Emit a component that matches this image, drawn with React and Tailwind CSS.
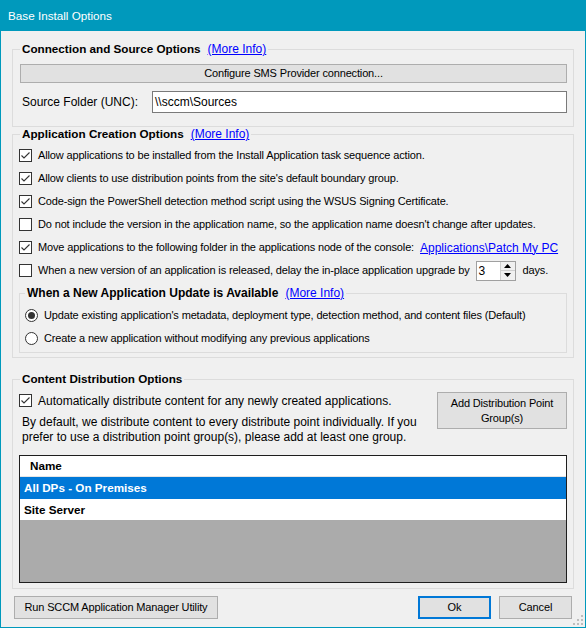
import React from "react";

const Check = ({ checked }) => (
  <span className="w-[13px] h-[13px] shrink-0 border border-[#333333] bg-white flex items-center justify-center">
    {checked && (
      <svg width="11" height="11" viewBox="0 0 11 11">
        <path d="M1.5 5.5 L4 8 L9.5 2.5" stroke="#333333" strokeWidth="1.1" fill="none" />
      </svg>
    )}
  </span>
);

const Radio = ({ checked }) => (
  <span className="w-[13px] h-[13px] shrink-0 rounded-full border border-[#333333] bg-white flex items-center justify-center">
    {checked && <span className="w-[7px] h-[7px] rounded-full bg-[#333333]" />}
  </span>
);

const MoreInfo = () => (
  <a className="ml-[7px] text-[12px] font-normal text-[#0000ff] underline">(More Info)</a>
);

const CheckRow = ({ checked, children }) => (
  <div className="h-[23px] flex items-center gap-[6px]">
    <Check checked={checked} />
    <span className="text-[11px] tracking-[-0.15px] whitespace-nowrap flex items-center">{children}</span>
  </div>
);

const WinButton = ({ className, children }) => (
  <div
    className={
      "border border-[#adadad] bg-[#e1e1e1] flex items-center justify-center text-center text-[11px] tracking-[-0.15px] " +
      className
    }
  >
    {children}
  </div>
);

export default function App() {
  return (
    <div className="relative w-[586px] h-[628px] flex flex-col bg-[#f0f0f0] border-x border-b border-[#0099bc] text-black font-['Liberation_Sans',Arial,sans-serif]">
      {/* title bar */}
      <div className="h-[31px] shrink-0 bg-[#0099bc] -mx-px flex items-center pl-[8px] text-white text-[11.7px]">
        Base Install Options
      </div>

      <div className="flex-1 px-[11px] flex flex-col">
        {/* connection */}
        <fieldset className="mt-[11px] border border-[#dcdcdc] pl-[7px] pr-[6px] pt-[8px] pb-[13px]">
          <legend className="px-[2px] leading-[14px] text-[11.7px]">
            <span className="font-bold">Connection and Source Options</span>
            <MoreInfo />
          </legend>
          <WinButton className="h-[19px]">Configure SMS Provider connection...</WinButton>
          <div className="mt-[8px] flex items-center h-[22px]">
            <span className="w-[132px] pl-[2px] text-[12px]">Source Folder (UNC):</span>
            <div className="flex-1 h-[22px] border border-[#7a7a7a] bg-white flex items-center pl-[2px] text-[12px]">
              \\sccm\Sources
            </div>
          </div>
        </fieldset>

        {/* application creation */}
        <fieldset className="border border-[#dcdcdc] px-[6px] pt-[3px] pb-[4px]">
          <legend className="ml-[1px] px-[2px] leading-[14px] text-[11.7px]">
            <span className="font-bold">Application Creation Options</span>
            <MoreInfo />
          </legend>
          <CheckRow checked>Allow applications to be installed from the Install Application task sequence action.</CheckRow>
          <CheckRow checked>Allow clients to use distribution points from the site's default boundary group.</CheckRow>
          <CheckRow checked>Code-sign the PowerShell detection method script using the WSUS Signing Certificate.</CheckRow>
          <CheckRow>Do not include the version in the application name, so the application name doesn't change after updates.</CheckRow>
          <CheckRow checked>
            Move applications to the following folder in the applications node of the console:
            <a className="ml-[6px] text-[12px] tracking-normal text-[#0000ff] underline">Applications\Patch My PC</a>
          </CheckRow>
          <div className="h-[23px] flex items-center gap-[6px]">
            <Check />
            <span className="text-[11px] tracking-[-0.15px] whitespace-nowrap">
              When a new version of an application is released, delay the in-place application upgrade by
            </span>
            <div className="w-[40px] h-[20px] border border-[#a0a0a0] bg-white flex">
              <span className="flex-1 pl-[2px] text-[12px] leading-[18px]">3</span>
              <div className="w-[15px] flex flex-col border-l border-[#cfcfcf] bg-[#f0f0f0]">
                <div className="flex-1 flex items-center justify-center border-b border-[#cfcfcf]">
                  <svg width="7" height="4" viewBox="0 0 7 4"><path d="M0 4 L3.5 0 L7 4 Z" fill="#000" /></svg>
                </div>
                <div className="flex-1 flex items-center justify-center">
                  <svg width="7" height="4" viewBox="0 0 7 4"><path d="M0 0 L7 0 L3.5 4 Z" fill="#000" /></svg>
                </div>
              </div>
            </div>
            <span className="ml-[1px] text-[11px] tracking-[-0.15px]">days.</span>
          </div>

          <fieldset className="mt-[4px] border border-[#dcdcdc] pl-[5px] pr-[6px] pt-[4px] pb-[2px]">
            <legend className="px-[2px] leading-[14px] text-[12px]">
              <span className="font-bold">When a New Application Update is Available</span>
              <MoreInfo />
            </legend>
            <div className="h-[23px] flex items-center gap-[6px]">
              <Radio checked />
              <span className="text-[11px] tracking-[-0.15px] whitespace-nowrap">
                Update existing application's metadata, deployment type, detection method, and content files (Default)
              </span>
            </div>
            <div className="h-[23px] flex items-center gap-[6px]">
              <Radio />
              <span className="text-[11px] tracking-[-0.15px] whitespace-nowrap">
                Create a new application without modifying any previous applications
              </span>
            </div>
          </fieldset>
        </fieldset>

        {/* content distribution */}
        <fieldset className="mt-[14px] border border-[#dcdcdc] px-[6px] pt-[6px] pb-[5px]">
          <legend className="ml-[1px] px-[2px] leading-[14px] text-[11.7px] font-bold">
            Content Distribution Options
          </legend>
          <div className="flex">
            <div className="flex flex-col">
              <div className="h-[17px] flex items-center gap-[6px]">
                <Check checked />
                <span className="text-[12px] whitespace-nowrap">
                  Automatically distribute content for any newly created applications.
                </span>
              </div>
              <p className="mt-[6px] pl-[3px] text-[12px] leading-[15px] whitespace-nowrap">
                By default, we distribute content to every distribute point individually. If you
                <br />
                prefer to use a distribution point group(s), please add at least one group.
              </p>
            </div>
            <WinButton className="ml-auto w-[130px] h-[37px] leading-[15px]">
              Add Distribution Point
              <br />
              Group(s)
            </WinButton>
          </div>

          <div className="mt-[10px] h-[128px] border border-[#1e1e1e] bg-[#ababab] flex flex-col">
            <div className="h-[21px] bg-white flex items-center pl-[10px] text-[11.7px] font-bold border-b border-[#e5e5e5]">
              Name
            </div>
            <div className="h-[22px] bg-[#0078d7] text-white flex items-center pl-[4px] text-[11.7px] font-bold">
              All DPs - On Premises
            </div>
            <div className="h-[21px] bg-white flex items-center pl-[4px] text-[11.7px] font-bold">
              Site Server
            </div>
          </div>
        </fieldset>

        {/* bottom buttons */}
        <div className="mt-[7px] flex px-[2px] gap-[8px]">
          <WinButton className="w-[204px] h-[23px]">Run SCCM Application Manager Utility</WinButton>
          <div className="ml-auto w-[73px] h-[23px] border-2 border-[#0078d7] bg-[#e1e1e1] flex items-center justify-center text-[11px]">
            Ok
          </div>
          <WinButton className="w-[73px] h-[23px]">Cancel</WinButton>
        </div>
      </div>

      {/* resize grip */}
      <svg className="absolute right-[2px] bottom-[2px]" width="10" height="10" viewBox="0 0 10 10">
        <rect x="8" y="0" width="2" height="2" fill="#bdbdbd" />
        <rect x="4" y="4" width="2" height="2" fill="#bdbdbd" />
        <rect x="8" y="4" width="2" height="2" fill="#bdbdbd" />
        <rect x="0" y="8" width="2" height="2" fill="#bdbdbd" />
        <rect x="4" y="8" width="2" height="2" fill="#bdbdbd" />
        <rect x="8" y="8" width="2" height="2" fill="#bdbdbd" />
      </svg>
    </div>
  );
}
